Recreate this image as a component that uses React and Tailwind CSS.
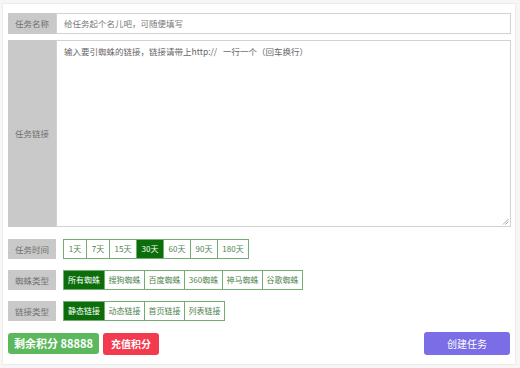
import React from "react";

const font = { fontFamily: '"Noto Sans CJK SC", "Noto Sans", sans-serif' };

function Group({ items, active, widths }) {
  return (
    <div className="flex h-[20px] border border-[#72ad72]">
      {items.map((t, i) => (
        <div
          key={t}
          className={
            "flex items-center justify-center text-[8px] leading-none " +
            (i > 0 ? "border-l border-[#72ad72] " : "") +
            (i === active ? "bg-[#0b6e0b] text-white" : "bg-white text-[#4f844f]")
          }
          style={{ width: widths[i] }}
        >
          {t}
        </div>
      ))}
    </div>
  );
}

function Label({ children, className = "" }) {
  return (
    <div className={"w-[48px] shrink-0 bg-[#c9c9c9] text-[#707070] text-[8.5px] flex items-center justify-center " + className}>
      {children}
    </div>
  );
}

export default function App() {
  return (
    <div className="w-[520px] h-[368px] bg-[#f6f6f6] pt-[3px] pl-[2px]" style={font}>
      <div className="w-[514px] h-[362px] bg-white border border-[#ededed] pt-[9px] pl-[5px] pr-[4px] flex flex-col">
        <div className="flex h-[21px]">
          <Label>任务名称</Label>
          <div className="flex-1 border border-[#d2d2d2] flex items-center pl-[7px] text-[8.5px] text-[#777]">
            给任务起个名儿吧，可随便填写
          </div>
        </div>
        <div className="flex h-[187px] mt-[6px]">
          <Label>任务链接</Label>
          <div className="flex-1 border border-[#d2d2d2] relative pl-[7px] pt-[4px] text-[8.5px] text-[#666] whitespace-pre">
            {"输入要引蜘蛛的链接，链接请带上http://   一行一个（回车换行）"}
            <svg className="absolute right-[1px] bottom-[1px]" width="7" height="7" viewBox="0 0 7 7">
              <path d="M6.5 1 L1 6.5 M6.5 3.5 L3.5 6.5" stroke="#aaa" strokeWidth="1" />
            </svg>
          </div>
        </div>
        <div className="flex h-[20px] mt-[12px] items-center">
          <Label className="h-[20px]">任务时间</Label>
          <div className="ml-[7px]">
            <Group items={["1天", "7天", "15天", "30天", "60天", "90天", "180天"]} active={3} widths={[22, 23, 27, 27, 27, 27, 31]} />
          </div>
        </div>
        <div className="flex h-[20px] mt-[11px] items-center">
          <Label className="h-[20px]">蜘蛛类型</Label>
          <div className="ml-[7px]">
            <Group items={["所有蜘蛛", "搜狗蜘蛛", "百度蜘蛛", "360蜘蛛", "神马蜘蛛", "谷歌蜘蛛"]} active={0} widths={[40, 40, 40, 38, 40, 40]} />
          </div>
        </div>
        <div className="flex h-[20px] mt-[11px] items-center">
          <Label className="h-[20px]">链接类型</Label>
          <div className="ml-[7px]">
            <Group items={["静态链接", "动态链接", "首页链接", "列表链接"]} active={0} widths={[40, 40, 40, 40]} />
          </div>
        </div>
        <div className="flex items-center mt-[11px] h-[23px]">
          <div className="h-[21px] w-[91px] rounded-[3px] bg-[#5cb85c] text-white text-[11px] font-bold flex items-center justify-center">
            剩余积分 88888
          </div>
          <div className="h-[22px] w-[56px] ml-[4px] rounded-[3px] bg-[#f23b4f] text-white text-[10px] font-bold flex items-center justify-center">
            充值积分
          </div>
          <div className="ml-auto mr-[1px] h-[23px] w-[86px] rounded-[3px] bg-[#7a6de6] text-white text-[10px] flex items-center justify-center">
            创建任务
          </div>
        </div>
      </div>
    </div>
  );
}
